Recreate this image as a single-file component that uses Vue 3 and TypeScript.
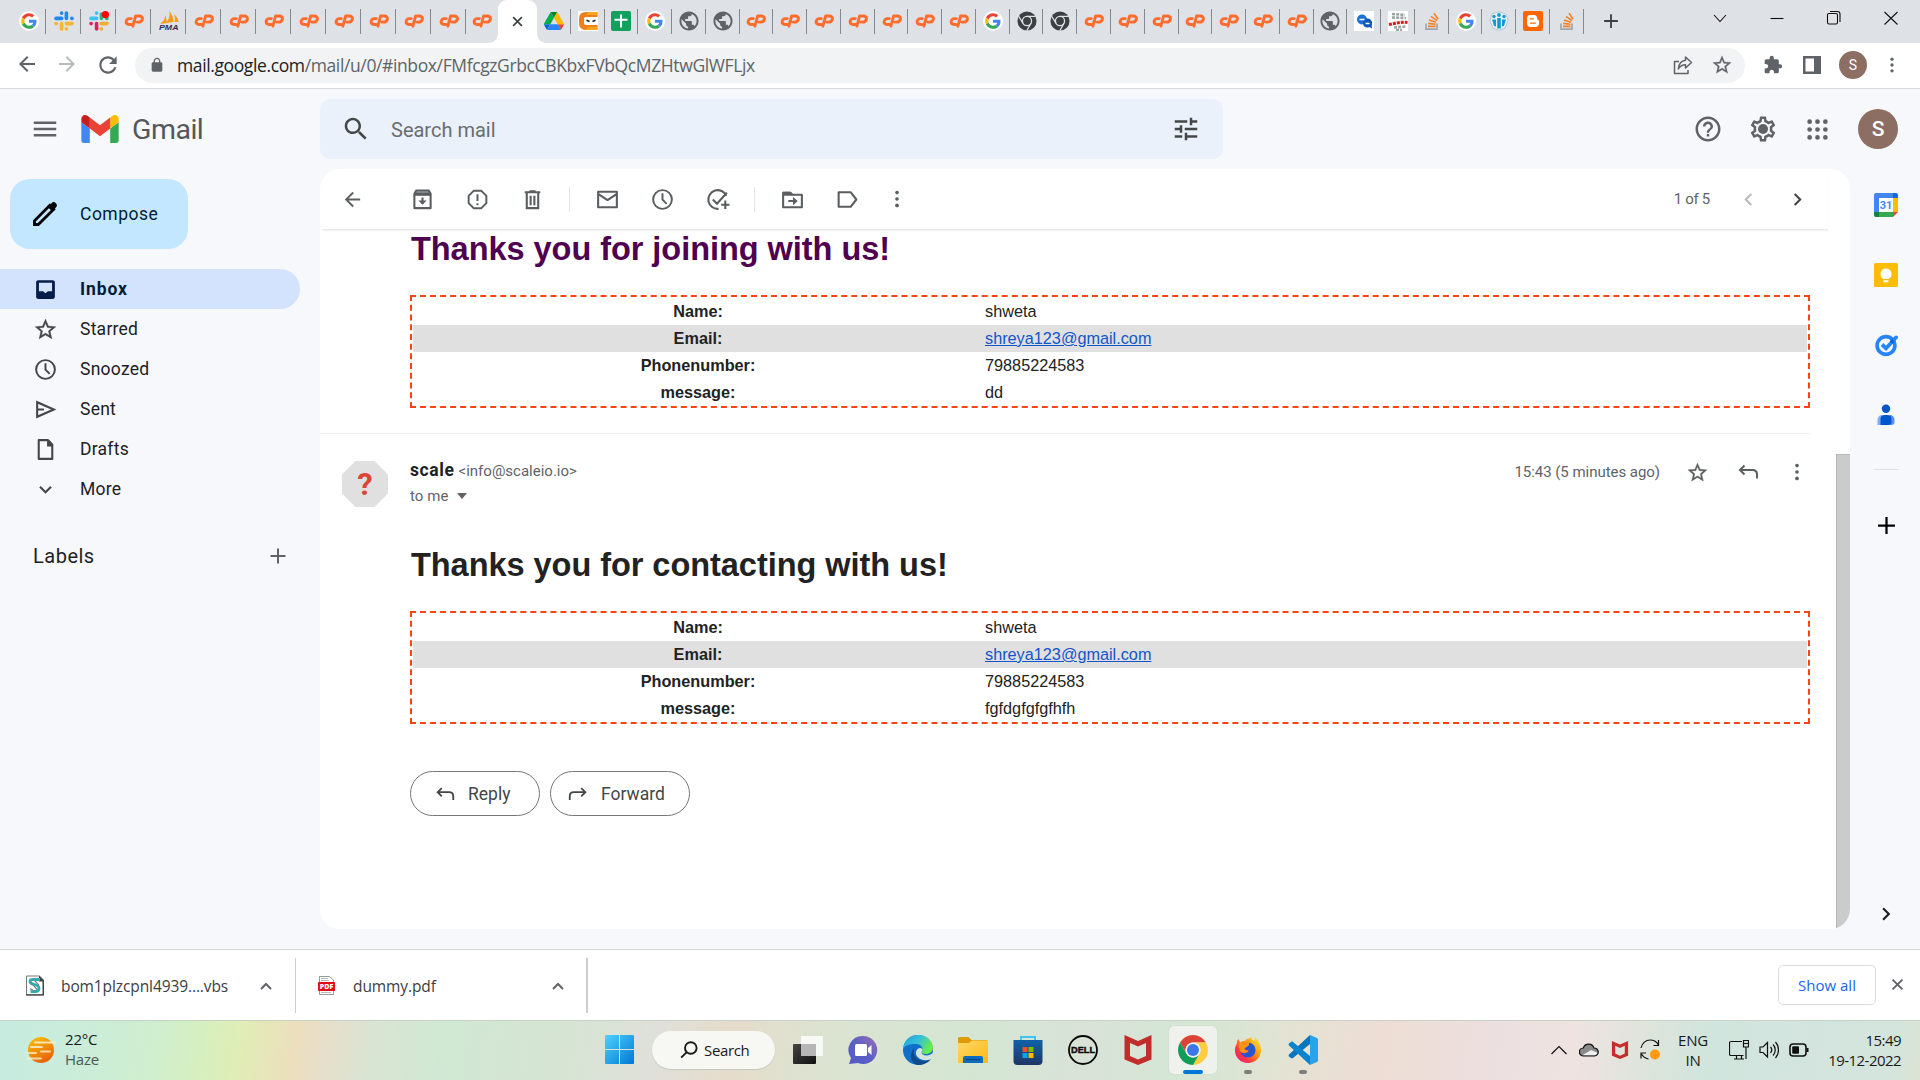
<script setup lang="ts">
interface Row {
  label: string
  value: string
  link?: boolean
}

const repeat = (name: string, count: number): string[] => Array.from({ length: count }, () => name)

const leftTabs: string[] = ['google', 'slack', 'slack-alert', 'cpanel', 'pma', ...repeat('cpanel', 9)]
const rightTabs: string[] = [
  'drive', 'ninja', 'sheets', 'google', 'globe', 'globe',
  ...repeat('cpanel', 7),
  'google', 'chrome-mono', 'chrome-mono',
  ...repeat('cpanel', 7),
  'globe', 'chat-blue', 'grid-red', 'stack', 'google', 'people', 'blogger', 'stack',
]

const folders = [
  { name: 'Inbox', icon: 'inbox' },
  { name: 'Starred', icon: 'star' },
  { name: 'Snoozed', icon: 'clock' },
  { name: 'Sent', icon: 'send' },
  { name: 'Drafts', icon: 'file' },
  { name: 'More', icon: 'expand' },
]

const toolGroups: string[][] = [
  ['archive', 'spam', 'trash'],
  ['mail', 'clock', 'task-add'],
  ['move', 'label'],
]

const rowsFor = (message: string): Row[] => [
  { label: 'Name:', value: 'shweta' },
  { label: 'Email:', value: 'shreya123@gmail.com', link: true },
  { label: 'Phonenumber:', value: '79885224583' },
  { label: 'message:', value: message },
]
const joinRows = rowsFor('dd')
const contactRows = rowsFor('fgfdgfgfgfhfh')

const pinned: { icon: string; state?: string }[] = [
  { icon: 'taskview' },
  { icon: 'teams' },
  { icon: 'edge' },
  { icon: 'explorer' },
  { icon: 'store' },
  { icon: 'dell' },
  { icon: 'mcafee' },
  { icon: 'chrome', state: 'active' },
  { icon: 'firefox', state: 'open' },
  { icon: 'vscode', state: 'open' },
]
</script>

<template>
  <div class="screen">
    <svg class="sprite" width="0" height="0" aria-hidden="true">
      <defs>
        <linearGradient id="g-win" x1="0" y1="0" x2="1" y2="1"><stop offset="0" stop-color="#50d0ff" /><stop offset="1" stop-color="#0078d4" /></linearGradient>
        <linearGradient id="g-sun" x1="0" y1="0" x2="0.5" y2="1"><stop offset="0" stop-color="#fcc400" /><stop offset="1" stop-color="#e8650c" /></linearGradient>
        <linearGradient id="g-teams" x1="0" y1="1" x2="1" y2="0"><stop offset="0" stop-color="#5558c8" /><stop offset="0.5" stop-color="#5b5fc7" /><stop offset="1" stop-color="#9a6fb0" /></linearGradient>
        <linearGradient id="g-edge" x1="0" y1="0" x2="1" y2="0.4"><stop offset="0" stop-color="#1f9fe0" /><stop offset="0.55" stop-color="#35c1d9" /><stop offset="1" stop-color="#66eb4e" /></linearGradient>
        <linearGradient id="g-folder" x1="0" y1="0" x2="1" y2="1"><stop offset="0" stop-color="#ffd96a" /><stop offset="1" stop-color="#fdb813" /></linearGradient>
        <linearGradient id="g-store" x1="0" y1="0" x2="0" y2="1"><stop offset="0" stop-color="#0f62a8" /><stop offset="1" stop-color="#1f3566" /></linearGradient>
        <linearGradient id="g-fox" x1="1" y1="0" x2="0" y2="1"><stop offset="0" stop-color="#fff44f" /><stop offset="0.4" stop-color="#ff980e" /><stop offset="0.7" stop-color="#ff3647" /><stop offset="1" stop-color="#e31587" /></linearGradient>
        <linearGradient id="g-dark" x1="0" y1="0" x2="1" y2="1"><stop offset="0" stop-color="#444" /><stop offset="1" stop-color="#111" /></linearGradient>
      </defs>

      <!-- tab favicons -->
      <symbol id="google" viewBox="0 0 60 60">
        <circle cx="30" cy="30" r="30" fill="#fff" />
        <g transform="translate(6.5 6.5) scale(.98)">
          <path fill="#EA4335" d="M24 9.5c3.54 0 6.71 1.22 9.21 3.6l6.85-6.85C35.9 2.38 30.47 0 24 0 14.62 0 6.51 5.38 2.56 13.22l7.98 6.19C12.43 13.72 17.74 9.5 24 9.5z" />
          <path fill="#4285F4" d="M46.98 24.55c0-1.57-.15-3.09-.38-4.55H24v9.02h12.94c-.58 2.96-2.26 5.48-4.78 7.18l7.73 6c4.51-4.18 7.09-10.36 7.09-17.65z" />
          <path fill="#FBBC05" d="M10.53 28.59c-.48-1.45-.76-2.99-.76-4.59s.27-3.14.76-4.59l-7.98-6.19C.92 16.46 0 20.12 0 24c0 3.88.92 7.54 2.56 10.78l7.97-6.19z" />
          <path fill="#34A853" d="M24 48c6.48 0 11.93-2.13 15.89-5.81l-7.73-6c-2.15 1.45-4.92 2.3-8.16 2.3-6.26 0-11.57-4.22-13.47-9.91l-7.98 6.19C6.51 42.62 14.62 48 24 48z" />
        </g>
      </symbol>
      <symbol id="slack" viewBox="0 0 20 20">
        <g stroke-width="3.6" stroke-linecap="round">
          <path stroke="#1e88f5" d="M7.6 2v.2M2 7.4h5.6M12.4 2v5.4M18 7.4h-.2" /><path stroke="#f4b82e" d="M2 12.6h.2M7.6 12.6V18M12.4 12.6H18M12.4 18v-.2" />
        </g>
      </symbol>
      <symbol id="slack-alert" viewBox="0 0 20 20">
        <g stroke-width="3.6" stroke-linecap="round">
          <path stroke="#36c5f0" d="M7.6 2v.2M2 7.4h5.6" /><path stroke="#2eb67d" d="M12.4 3v4.4M18 7.4h-.2" /><path stroke="#e01e5a" d="M2 12.6h.2M7.6 12.6V18" /><path stroke="#ecb22e" d="M12.4 12.6H18M12.4 18v-.2" />
        </g>
        <circle cx="16.4" cy="3.6" r="3.6" fill="#f00" />
      </symbol>
      <symbol id="cpanel" viewBox="0 0 20 20">
        <g fill="none" stroke="#ff6c2c" stroke-width="2.9" stroke-linecap="round" stroke-linejoin="round">
          <path d="M7.3 7.6H5.3a3.1 3.1 0 0 0-3.2 3c0 1.8 1.2 2.9 3 2.9h2" /><path d="M8.9 15.2 11.6 5h3.8c2.2 0 3.4 1.4 3 3.1-.4 2-1.8 3-3.8 3h-1.8" />
        </g>
      </symbol>
      <symbol id="drive" viewBox="0 0 87.3 78">
        <path d="m6.6 66.85 3.85 6.65c.8 1.4 1.95 2.5 3.3 3.3l13.75-23.8h-27.5c0 1.55.4 3.1 1.2 4.5z" fill="#0066da" /><path d="m43.65 25-13.75-23.8c-1.35.8-2.5 1.9-3.3 3.3l-25.4 44a9.06 9.06 0 0 0-1.2 4.5h27.5z" fill="#00ac47" /><path d="m73.55 76.8c1.35-.8 2.5-1.9 3.3-3.3l1.6-2.75 7.65-13.25c.8-1.4 1.2-2.95 1.2-4.5h-27.5l5.85 11.5z" fill="#ea4335" /><path d="m43.65 25 13.75-23.8c-1.35-.8-2.9-1.2-4.5-1.2h-18.5c-1.6 0-3.15.45-4.5 1.2z" fill="#00832d" /><path d="m59.8 53h-32.3l-13.75 23.8c1.35.8 2.9 1.2 4.5 1.2h50.8c1.6 0 3.15-.45 4.5-1.2z" fill="#2684fc" /><path d="m73.4 26.5-12.7-22c-.8-1.4-1.95-2.5-3.3-3.3l-13.75 23.8 16.15 28h27.45c0-1.55-.4-3.1-1.2-4.5z" fill="#ffba00" />
      </symbol>
      <symbol id="ninja" viewBox="0 0 20 20">
        <rect width="20" height="20" fill="#fff" /><path fill="none" stroke="#ef7f1a" stroke-width="5" d="M19.5 3.5H8Q3.500 3.500 3.500 8v4Q3.500 16.500 8 16.500h11.500" /><path fill="#f7a81a" d="M10 1h9.500v3H8zM10 16h9.500v3H8z" /><path fill="#fff" d="M9 7h10.500v6H9a3 3 0 0 1 0-6z" /><path stroke="#222" stroke-width="1.700" d="M8.500 9.300l3 1.200M17.500 9.300l-3 1.200" />
      </symbol>
      <symbol id="sheets" viewBox="0 0 20 20"><rect width="20" height="20" rx="2" fill="#12a15c" /><path stroke="#fff" stroke-width="2" d="M10 3.500v13M3.500 8.800h13" /></symbol>
      <symbol id="globe" viewBox="1.5 1.5 21 21"><path fill="#5f6368" d="M12 2C6.48 2 2 6.48 2 12s4.48 10 10 10 10-4.48 10-10S17.52 2 12 2zm-1 17.93c-3.95-.49-7-3.85-7-7.93 0-.62.08-1.21.21-1.79L9 15v1c0 1.1.9 2 2 2v1.93zm6.9-2.54c-.26-.81-1-1.39-1.9-1.39h-1v-3c0-.55-.45-1-1-1H8v-2h2c.55 0 1-.45 1-1V7h2c1.1 0 2-.9 2-2v-.41c2.93 1.19 5 4.06 5 7.41 0 2.08-.8 3.97-2.1 5.39z" /></symbol>
      <symbol id="chrome-mono" viewBox="1 1 46 46">
        <circle cx="24" cy="24" r="22" fill="#3c4043" /><g fill="none" stroke="#dee1e6" stroke-width="3"><path d="M44 13.500H24M14.900 29.250 4.500 12.500M33.100 29.250 23.500 46.500" /><circle cx="24" cy="24" r="10.500" /></g>
      </symbol>
      <symbol id="chat-blue" viewBox="0 0 20 20"><rect width="20" height="20" fill="#fff" /><circle cx="8" cy="8.5" r="5" fill="#1d6fd8" /><circle cx="13.5" cy="12" r="4.6" fill="#0d57b8" /><path fill="#0d57b8" d="M14 15l4 2.5-.5-5z" /><path stroke="#fff" stroke-width="1.3" d="M5.5 8.5h5M11.5 12.5h4" /></symbol>
      <symbol id="grid-red" viewBox="0 0 20 20"><rect width="20" height="20" fill="#fff" /><path fill="none" stroke="#9aa5a0" stroke-width="2.6" stroke-dasharray="3 1.2" d="M4 3l13 1M4 6.5l14 .5M6 16.5l12-1M8 19h6" /><path fill="none" stroke="#e01b22" stroke-width="3.2" stroke-dasharray="3 1" d="M1 13.5c6-1 12-3 18.500-2" /></symbol>
      <symbol id="stack" viewBox="0 0 20 20"><path fill="none" stroke="#9fa6ad" stroke-width="1.7" d="M4 12.5v5.700h11v-5.700" /><path fill="none" stroke="#f48024" stroke-width="1.6" d="M6 15.4h7.5M6.2 12.4l7.3.8M7 9l7 2.2M9 5.4l6 4.3M12 2.2l4.2 6" /></symbol>
      <symbol id="people" viewBox="0 0 20 20"><path fill="#e9f5fb" stroke="#a9bcc6" stroke-width=".8" d="M10 .8 17 3l2 7-3 7-6 2.4L4 17l-3-7 2-7z" /><g fill="#1597d3"><circle cx="10" cy="4" r="1.9" /><circle cx="5" cy="5.5" r="1.7" /><circle cx="15" cy="5.5" r="1.7" /><path d="M8.2 7h3.6v10.5H8.2zM3 8.5h4v7l-2-.5zM13 8.5h4l-2 6.5-2 .5z" /></g></symbol>
      <symbol id="blogger" viewBox="0 0 20 20"><rect width="20" height="20" rx="2" fill="#ff6600" /><path fill="#fff" fill-rule="evenodd" d="M7.5 4h3.3c2 0 3.4 1.4 3.4 3.2 0 1.5.3 1.8 1.3 2 .5.1.6.5.6 1v2c0 2.3-1.6 3.8-3.8 3.8H7.500C5.3 16 4 14.5 4 12.4V7.6C4 5.4 5.3 4 7.5 4zm.1 3.2c-1 0-1 1.4 0 1.400h2.7c1 0 1-1.4 0-1.4zm0 4.2c-1 0-1 1.4 0 1.4h4.6c1 0 1-1.4 0-1.4z" /></symbol>

      <!-- line icons -->
      <symbol id="back" viewBox="0 0 24 24"><path fill="currentColor" d="M20 11H7.83l5.59-5.59L12 4l-8 8 8 8 1.41-1.41L7.83 13H20v-2z" /></symbol>
      <symbol id="refresh" viewBox="0 0 24 24"><path fill="currentColor" d="M17.65 6.35C16.2 4.9 14.21 4 12 4c-4.42 0-7.99 3.58-7.99 8s3.57 8 7.99 8c3.73 0 6.84-2.55 7.73-6h-2.08c-.82 2.33-3.04 4-5.65 4-3.31 0-6-2.69-6-6s2.69-6 6-6c1.66 0 3.14.69 4.22 1.78L13 11h7V4l-2.35 2.35z" /></symbol>
      <symbol id="lock" viewBox="0 0 24 24"><path fill="currentColor" d="M18 8h-1V6c0-2.76-2.24-5-5-5S7 3.24 7 6v2H6c-1.1 0-2 .9-2 2v10c0 1.1.9 2 2 2h12c1.1 0 2-.9 2-2V10c0-1.1-.9-2-2-2zM8.9 6a3.1 3.1 0 0 1 6.2 0v2H8.9V6z" /></symbol>
      <symbol id="share" viewBox="0 0 20 20"><path fill="none" stroke="currentColor" stroke-width="1.5" stroke-linejoin="round" d="M6 6.5H1.5v12H15V15M12.5 2l6 5.5-6 5.5V9.8C9 9.8 7 11 5.3 14 5.8 8.8 8.8 5.6 12.5 5.2z" /></symbol>
      <symbol id="puzzle" viewBox="0 0 24 24"><path fill="currentColor" d="M20.5 11H19V7c0-1.1-.9-2-2-2h-4V3.5C13 2.12 11.88 1 10.5 1S8 2.12 8 3.5V5H4c-1.1 0-1.99.9-1.99 2v3.8H3.5c1.49 0 2.7 1.21 2.7 2.7s-1.21 2.7-2.7 2.7H2V20c0 1.1.9 2 2 2h3.8v-1.5c0-1.49 1.21-2.7 2.7-2.7 1.49 0 2.7 1.21 2.7 2.7V22H17c1.1 0 2-.9 2-2v-4h1.5c1.38 0 2.5-1.12 2.5-2.5S21.88 11 20.5 11z" /></symbol>
      <symbol id="panel" viewBox="0 0 18 18"><path fill="currentColor" fill-rule="evenodd" d="M0 0h18v18H0zM2.5 2.500v13h8.500v-13z" /></symbol>
      <symbol id="dots" viewBox="0 0 24 24"><g fill="currentColor"><circle cx="12" cy="5" r="2" /><circle cx="12" cy="12" r="2" /><circle cx="12" cy="19" r="2" /></g></symbol>
      <symbol id="menu" viewBox="0 0 24 24"><path fill="currentColor" d="M3 18h18v-2H3v2zm0-5h18v-2H3v2zm0-7v2h18V6H3z" /></symbol>
      <symbol id="search" viewBox="0 0 24 24"><path fill="currentColor" d="M15.5 14h-.79l-.28-.27C15.41 12.59 16 11.11 16 9.5 16 5.91 13.09 3 9.5 3S3 5.91 3 9.5 5.91 16 9.5 16c1.61 0 3.09-.59 4.23-1.57l.27.28v.79l5 4.99L20.49 19l-4.99-5zm-6 0C7.01 14 5 11.99 5 9.5S7.01 5 9.5 5 14 7.01 14 9.5 11.99 14 9.5 14z" /></symbol>
      <symbol id="tune" viewBox="0 0 24 24"><path fill="currentColor" d="M3 17v2h6v-2H3zM3 5v2h10V5H3zm10 16v-2h8v-2h-8v-2h-2v6h2zM7 9v2H3v2h4v2h2V9H7zm14 4v-2H11v2h10zm-6-4h2V7h4V5h-4V3h-2v6z" /></symbol>
      <symbol id="help" viewBox="0 0 24 24"><path fill="currentColor" d="M11 18h2v-2h-2v2zm1-16C6.48 2 2 6.48 2 12s4.48 10 10 10 10-4.48 10-10S17.52 2 12 2zm0 18c-4.41 0-8-3.59-8-8s3.59-8 8-8 8 3.59 8 8-3.59 8-8 8zm0-14c-2.21 0-4 1.79-4 4h2c0-1.1.9-2 2-2s2 .9 2 2c0 2-3 1.75-3 5h2c0-2.25 3-2.5 3-5 0-2.21-1.79-4-4-4z" /></symbol>
      <symbol id="gear" viewBox="0 0 24 24"><path fill="currentColor" d="M19.43 12.98c.04-.32.07-.64.07-.98 0-.34-.03-.66-.07-.98l2.11-1.65c.19-.15.24-.42.12-.64l-2-3.46c-.09-.16-.26-.25-.44-.25-.06 0-.12.01-.17.03l-2.49 1c-.52-.4-1.08-.73-1.69-.98l-.38-2.65C14.46 2.18 14.25 2 14 2h-4c-.25 0-.46.18-.49.42l-.38 2.65c-.61.25-1.17.59-1.69.98l-2.49-1c-.06-.02-.12-.03-.18-.03-.17 0-.34.09-.43.25l-2 3.46c-.13.22-.07.49.12.64l2.11 1.65c-.04.32-.07.65-.07.98 0 .33.03.66.07.98l-2.11 1.65c-.19.15-.24.42-.12.64l2 3.46c.09.16.26.25.44.25.06 0 .12-.01.17-.03l2.49-1c.52.4 1.08.73 1.69.98l.38 2.65c.03.24.24.42.49.42h4c.25 0 .46-.18.49-.42l.38-2.65c.61-.25 1.17-.59 1.69-.98l2.49 1c.06.02.12.03.18.03.17 0 .34-.09.43-.25l2-3.46c.12-.22.07-.49-.12-.64l-2.11-1.65zm-1.98-1.71c.04.31.05.52.05.73 0 .21-.02.43-.05.73l-.14 1.13.89.7 1.08.84-.7 1.21-1.27-.51-1.04-.42-.9.68c-.43.32-.84.56-1.25.73l-1.06.43-.16 1.13-.2 1.35h-1.4l-.19-1.35-.16-1.13-1.06-.43c-.43-.18-.83-.41-1.23-.71l-.91-.7-1.06.43-1.27.51-.7-1.21 1.08-.84.89-.7-.14-1.13c-.03-.31-.05-.54-.05-.74s.02-.43.05-.73l.14-1.13-.89-.7-1.08-.84.7-1.21 1.27.51 1.04.42.9-.68c.43-.32.84-.56 1.25-.73l1.06-.43.16-1.13.2-1.35h1.39l.19 1.35.16 1.13 1.06.43c.43.18.83.41 1.23.71l.91.7 1.06-.43 1.27-.51.7 1.21-1.07.85-.89.7.14 1.13z" /><circle cx="12" cy="12" r="4" fill="currentColor" /></symbol>
      <symbol id="apps" viewBox="0 0 24 24"><path stroke="currentColor" stroke-width="4.2" stroke-linecap="round" d="M5 5h0M12 5h0M19 5h0M5 12h0M12 12h0M19 12h0M5 19h0M12 19h0M19 19h0" /></symbol>
      <symbol id="pencil" viewBox="0 0 24 24"><path fill="none" stroke="currentColor" stroke-width="2.6" d="M2.3 21.700v-3.500L16.5 3.9l3.600 3.600L5.800 21.700z" /><path fill="currentColor" d="M14.500 5.500 18 2a2.800 2.800 0 0 1 4 4L18.500 9.500z" /></symbol>
      <symbol id="inbox" viewBox="0 0 24 24"><path fill="currentColor" d="M19 3H5c-1.1 0-2 .9-2 2v14c0 1.1.9 2 2 2h14c1.1 0 2-.9 2-2V5c0-1.1-.9-2-2-2zm-.7 10.600h-4L12 15.600l-2.300-2h-4V5.600h12.600z" /></symbol>
      <symbol id="star" viewBox="0 0 24 24"><path fill="currentColor" stroke="currentColor" stroke-width=".3" d="M22 9.24l-7.19-.62L12 2 9.19 8.63 2 9.24l5.46 4.73L5.82 21 12 17.27 18.18 21l-1.63-7.03L22 9.24zM12 15.4l-3.76 2.27 1-4.28-3.32-2.88 4.38-.38L12 6.1l1.71 4.04 4.38.38-3.32 2.88 1 4.28L12 15.4z" /></symbol>
      <symbol id="clock" viewBox="0 0 24 24"><circle cx="12" cy="12" r="9" fill="none" stroke="currentColor" stroke-width="1.9" /><path fill="none" stroke="currentColor" stroke-width="1.9" d="M12 6v6.200l4 4" /></symbol>
      <symbol id="send" viewBox="0 0 24 24"><path fill="none" stroke="currentColor" stroke-width="2" d="M4 5v14L20 12zM4 12h6.5" /></symbol>
      <symbol id="file" viewBox="0 0 24 24"><path fill="none" stroke="currentColor" stroke-width="2" stroke-linejoin="round" d="M5.500 3h9l4 4.500V21h-13z" /><path fill="currentColor" d="M13.500 3h2l3.500 4v2h-5.500z" /></symbol>
      <symbol id="expand" viewBox="0 0 24 24"><path fill="currentColor" d="M16.59 8.59 12 13.17 7.41 8.59 6 10l6 6 6-6z" /></symbol>
      <symbol id="chevron" viewBox="0 0 24 24"><path fill="currentColor" d="M10 6 8.59 7.41 13.17 12l-4.58 4.59L10 18l6-6z" /></symbol>
      <symbol id="plus" viewBox="0 0 24 24"><path stroke="currentColor" stroke-width="2" d="M12 4.500v15M4.500 12h15" /></symbol>
      <symbol id="archive" viewBox="0 0 24 24"><path fill="none" stroke="currentColor" stroke-width="2" stroke-linejoin="round" d="M4.200 6.500 6 3.500h12l1.800 3V20.300H4.200zM4.200 7.500h15.600M12 10v6" /><path fill="currentColor" d="M4.500 5h15v3h-15zM8 13h8l-4 4z" /></symbol>
      <symbol id="spam" viewBox="0 0 24 24"><path fill="none" stroke="currentColor" stroke-width="1.9" stroke-linejoin="round" d="M8.500 3.500h7l5 5v7l-5 5h-7l-5-5v-7zM12 7v6.500M12 15.500v2" /></symbol>
      <symbol id="trash" viewBox="0 0 24 24"><path fill="none" stroke="currentColor" stroke-width="2" d="M4.500 5h15M9 4h6M6.500 6v14.300h11V6M10.200 8.500v9M13.800 8.500v9" /></symbol>
      <symbol id="mail" viewBox="0 0 24 24"><path fill="none" stroke="currentColor" stroke-width="2" stroke-linejoin="round" d="M3 4.500h18v15H3zM3 6.500l9 6 9-6" /></symbol>
      <symbol id="task-add" viewBox="0 0 24 24"><path fill="none" stroke="currentColor" stroke-width="2" d="M20.500 8.500A9 9 0 1 0 13 21M7.500 12l4 4L21 5.500M19.500 13v8M15.500 17h8" /></symbol>
      <symbol id="move" viewBox="0 0 24 24"><path fill="none" stroke="currentColor" stroke-width="2" stroke-linejoin="round" d="M3 5.500h7l2 2h9v12H3zM8 13.500h6" /><path fill="currentColor" d="M3 4.500h7l2 3v1H3zM12.500 9.500l4.500 4-4.500 4z" /></symbol>
      <symbol id="label" viewBox="0 0 24 24"><path fill="none" stroke="currentColor" stroke-width="2" stroke-linejoin="round" d="M3.500 5H15l5.500 7-5.500 7H3.500z" /></symbol>
      <symbol id="reply" viewBox="0 0 24 24"><path fill="none" stroke="currentColor" stroke-width="2" d="M8.500 5.500 4 10l4.500 4.500M4 10H16.500c3 0 4.500 1.800 4.500 4.500V18.500" /></symbol>
      <symbol id="close" viewBox="0 0 24 24"><path stroke="currentColor" stroke-width="2.6" d="M5 5l14 14M19 5 5 19" /></symbol>

      <!-- product icons -->
      <symbol id="gmail" viewBox="52 42 88 66"><path fill="#4285f4" d="M58 108h14V74L52 59v43c0 3.32 2.69 6 6 6" /><path fill="#34a853" d="M120 108h14c3.32 0 6-2.69 6-6V59l-20 15" /><path fill="#fbbc04" d="M120 48v26l20-15v-8c0-7.42-8.47-11.65-14.4-7.2" /><path fill="#ea4335" d="M72 74V48l24 18 24-18v26L96 92" /><path fill="#c5221f" d="M52 51v8l20 15V48l-5.6-4.2c-5.94-4.45-14.4-.22-14.4 7.2" /></symbol>
      <symbol id="keep" viewBox="0 0 24 24"><rect width="24" height="24" rx="1.5" fill="#fbbc04" /><path fill="#fff" d="M12 5.500a5.500 5.500 0 0 0-3 10.100V16h6v-.4a5.500 5.500 0 0 0-3-10.100zM9.500 17.200h5v2h-5z" /></symbol>
      <symbol id="tasks" viewBox="0 0 24 24"><circle cx="12" cy="12.500" r="8.900" fill="none" stroke="#2684fc" stroke-width="3.600" /><path fill="none" stroke="#2684fc" stroke-width="3.800" d="M8 11.500l4 3.800 6-6.300" /><path stroke="#0066da" stroke-width="3.800" d="M17 9.500 20.500 6" /><path stroke="#2684fc" stroke-width="3.800" stroke-linecap="round" d="M20.500 6l1.600-1.600" /></symbol>
      <symbol id="contacts" viewBox="0 0 24 24"><circle cx="12" cy="5.800" r="4.200" fill="#0057cc" /><path fill="#83aefb" d="M3.500 22v-5c0-3 2-5 5-5v10z" /><path fill="#5c8ef5" d="M15.500 22h2c2 0 3-1 3-3v-2c0-3-2-5-5-5z" /><path fill="#0057cc" d="M6.500 22v-6c0-2.500 1.500-4 4-4h3c2.500 0 4 1.500 4 4v3c0 2-1 3-3 3z" /></symbol>

      <!-- taskbar icons -->
      <symbol id="windows" viewBox="0 0 29 29"><path fill="url(#g-win)" d="M1 0h13v14H0V1a1 1 0 0 1 1-1zM15 0h13a1 1 0 0 1 1 1v13H15zM0 15h14v14H1a1 1 0 0 1-1-1zM15 15h14v13a1 1 0 0 1-1 1H15z" /></symbol>
      <symbol id="taskview" viewBox="0 0 30 30"><rect x="0" y="9" width="23" height="20" rx="1" fill="url(#g-dark)" /><rect x="8" y="1" width="22" height="20" rx="1" fill="#fff" fill-opacity=".8" /><path fill="#b6b6b6" d="M8 9h15v12H8z" /></symbol>
      <symbol id="teams" viewBox="0 0 30 30"><path fill="url(#g-teams)" d="M15 1a14 14 0 1 1-5 27L1 29l2-6A14 14 0 0 1 15 1z" /><rect x="7" y="9" width="12" height="12" rx="1.5" fill="#fff" /><path fill="#fff" d="m20 13 3.500-3v10L20 17z" /></symbol>
      <symbol id="edge" viewBox="0 0 30 30"><circle cx="15" cy="15" r="15" fill="#0f6fc9" /><path fill="url(#g-edge)" d="M0 14C1 5 7 0 15 0c9 0 15 6 15 12.500 0 4-3 6.500-7 6.500-3 0-4.500-1-4.500-2 0-1 1-1.500 1-3 0-3-3-5-7-5C6 9 1 11 0 14z" /><path fill="#114a8b" d="M11 13c-2 8 4 13 11 13 2 0 4-1 6-2-3 4-8 6-13 6C9 29 5 21 11 13z" /><path fill="#d6e5dc" d="M18.500 17c0 2 2 3.500 5 3.500 2.500 0 5-1 6.300-3l.2 5-3 2C19 27 12 22 13 17c.5-2.500 2.500-4 4-4 1.500 0 2.500 1.500 2.500 2 0 1-1 1-1 2z" /></symbol>
      <symbol id="explorer" viewBox="0 0 30 30"><path fill="#dd9a0a" d="M0 3.500A1.500 1.500 0 0 1 1.500 2h9l3 3H29v6H0z" /><path fill="url(#g-folder)" d="M0 8h11l3-2.500h16V28H0z" /><path fill="#0f6cbd" d="M5 28v-5a2 2 0 0 1 2-2h16a2 2 0 0 1 2 2v5z" /><path stroke="#0a4884" stroke-width="1.200" d="M8 24.500h14" /></symbol>
      <symbol id="store" viewBox="0 0 30 30"><path fill="none" stroke="#3cc5f5" stroke-width="2" d="M8 7V2h14v5" /><path fill="url(#g-store)" d="M.500 5h29v21a4 4 0 0 1-4 4h-21a4 4 0 0 1-4-4z" /><path fill="#f25022" d="M9.500 12h5v5h-5z" /><path fill="#7fba00" d="M15.500 12h5v5h-5z" /><path fill="#00a4ef" d="M9.500 18h5v5h-5z" /><path fill="#ffb900" d="M15.500 18h5v5h-5z" /></symbol>
      <symbol id="mcafee" viewBox="0 0 30 30"><path fill="#c01818" fill-opacity=".9" d="M1.500 0 15 6 28.500 0v24.500L15 30 1.500 24.500zM7 8v13l8 3.500 8-3.500V8l-8 3.500z" fill-rule="evenodd" /></symbol>
      <symbol id="chrome" viewBox="2 2 44 44"><path fill="#db4437" d="M4.950 13A22 22 0 0 1 43.050 13H24A11 11 0 0 0 14.470 29.500Z" /><path fill="#ffcd40" d="M43.050 13A22 22 0 0 1 24 46L33.530 29.500A11 11 0 0 0 24 13Z" /><path fill="#0f9d58" d="M24 46A22 22 0 0 1 4.950 13L14.470 29.500A11 11 0 0 0 33.530 29.500Z" /><circle cx="24" cy="24" r="11" fill="#f1f1f1" /><circle cx="24" cy="24" r="8.800" fill="#3b78e7" /></symbol>
      <symbol id="firefox" viewBox="0 0 30 30"><path fill="url(#g-fox)" d="M3 8c0-2 1-4 2-5 0 2 1 3 2 4 1-1 3-2 5-2 2-3 4-2 7-4 0 2 0 3 2 4 2-1 1-3 1-4 5 4 7 9 7 14 0 8-6 14-14 14S1 23 1 15c0-3 1-5 2-7z" /><path fill="#2456d6" d="M15 7c5 0 8 4 8 8 0 5-4 8-8 8-5 0-8-4-8-7 2 2 4 3 6 2 3-1 3-2 2-3-3 0-4-1-4-3 1-1 3-1 4-1z" /><path fill="#ff9417" d="M5 8c3-1 5 0 6 1 2-2 3-4 6-4-1 2-1 3-1 5l-3 2c-3 1-2 4 2 4-3 4-8 2-9-1z" /></symbol>
      <symbol id="vscode" viewBox="0 0 30 30"><path fill="#0a74bd" d="M22 0 1 19.500c-1 1 0 2 .5 2.500l1.500 1c1 .6 1.600.4 2 0L22 9z" /><path fill="#0a84ce" d="M22 30 1 10.500c-1-1 0-2 .5-2.500L3 7c1-.6 1.600-.4 2 0l17 14z" /><path fill="#29a3ee" d="M22 0l7 3c.6.300 1 1 1 1.500v21c0 .6-.4 1.200-1 1.500l-7 3z" /></symbol>
      <symbol id="sun" viewBox="0 0 30 26"><circle cx="15" cy="13" r="13" fill="url(#g-sun)" /><g stroke="#fbeecb" stroke-width="2" stroke-linecap="round"><path d="M9 5.500h20" opacity=".9" /><path d="M5 10h11" opacity=".85" /><path d="M15 14.500h9" opacity=".8" /><path d="M1 16h9" opacity=".8" /><path d="M1 21.500h14" opacity=".8" /></g></symbol>
    </svg>

    <!-- tab strip -->
    <header class="tabstrip">
      <div class="tabs tabs-left">
        <div v-for="(t, i) in leftTabs" :key="i" class="tab">
          <svg v-if="t === 'pma'" width="20" height="20" viewBox="0 0 20 20"><path fill="#f89c0e" d="M1 13C4 11 6 8 6.500 4l1.500 8zM7 12C10 9 11 5 10.500 0c3 4 4 8 4 11zM15.500 11c1-3 .5-6-1-8 3 2 5 5 5 8z" /><text x="0" y="19.400" font-family="Liberation Sans" font-weight="700" font-style="italic" font-size="7.400" textLength="19.500" lengthAdjust="spacingAndGlyphs" fill="#2f2f5c">PMA</text></svg>
          <svg v-else width="20" height="20"><use :href="'#' + t" /></svg>
        </div>
      </div>
      <div class="tab-active"><svg width="15" height="15"><use href="#close" /></svg></div>
      <div class="tabs tabs-right">
        <div v-for="(t, i) in rightTabs" :key="i" class="tab"><svg width="20" height="20"><use :href="'#' + t" /></svg></div>
      </div>
      <svg class="newtab" width="22" height="22"><use href="#plus" /></svg>
      <div class="winctl">
        <svg width="16" height="16" viewBox="0 0 16 16"><path d="M2 5l6 6.500L14 5" /></svg>
        <svg width="16" height="16" viewBox="0 0 16 16"><path d="M1.500 8.500h13" /></svg>
        <svg width="16" height="16" viewBox="0 0 16 16"><rect x="1.500" y="3.500" width="10" height="10.500" rx="1.500" /><path d="M4 1.500h7.500a2.500 2.500 0 0 1 2.500 2.500v8" /></svg>
        <svg width="16" height="16" viewBox="0 0 16 16"><path d="M1.500 2l13 12.500M14.500 2l-13 12.500" /></svg>
      </div>
    </header>

    <!-- address bar -->
    <div class="toolbar">
      <div class="nav">
        <svg width="24" height="24"><use href="#back" /></svg>
        <svg class="forward" width="24" height="24"><use href="#back" /></svg>
        <svg width="26" height="26"><use href="#refresh" /></svg>
      </div>
      <div class="omnibox">
        <svg class="lock" width="16" height="16"><use href="#lock" /></svg>
        <span class="url"><b>mail.google.com</b>/mail/u/0/#inbox/FMfcgzGrbcCBKbxFVbQcMZHtwGlWFLjx</span>
        <svg class="share" width="20" height="20"><use href="#share" /></svg>
        <svg width="22" height="22"><use href="#star" /></svg>
      </div>
      <div class="ext">
        <svg width="20" height="20"><use href="#puzzle" /></svg>
        <svg width="18" height="18"><use href="#panel" /></svg>
        <span class="avatar small">S</span>
        <svg width="20" height="20"><use href="#dots" /></svg>
      </div>
    </div>

    <!-- mail client -->
    <div class="gmail">
      <div class="topbar">
        <div class="brand">
          <svg class="burger" width="30" height="30"><use href="#menu" /></svg>
          <svg width="38" height="28"><use href="#gmail" /></svg>
          <span class="wordmark">Gmail</span>
        </div>
        <div class="searchbox">
          <svg width="30" height="30"><use href="#search" /></svg>
          <span class="placeholder">Search mail</span>
          <svg width="30" height="30"><use href="#tune" /></svg>
        </div>
        <div class="account">
          <svg width="30" height="30"><use href="#help" /></svg>
          <svg width="30" height="30"><use href="#gear" /></svg>
          <svg width="27" height="27"><use href="#apps" /></svg>
          <span class="avatar">S</span>
        </div>
      </div>

      <div class="body">
        <aside class="sidebar">
          <button class="compose"><svg width="26" height="26"><use href="#pencil" /></svg><span>Compose</span></button>
          <nav>
            <a v-for="f in folders" :key="f.name" class="folder" :class="{ current: f.name === 'Inbox' }">
              <svg width="25" height="25"><use :href="'#' + f.icon" /></svg><span>{{ f.name }}</span>
            </a>
          </nav>
          <div class="labels"><span>Labels</span><svg width="24" height="24"><use href="#plus" /></svg></div>
        </aside>

        <main class="card">
          <div class="actions">
            <svg class="goback" width="23" height="23"><use href="#back" /></svg>
            <div v-for="(group, gi) in toolGroups" :key="gi" class="group">
              <span v-for="icon in group" :key="icon" class="tool"><svg width="25" height="25"><use :href="'#' + icon" /></svg></span>
            </div>
            <svg class="more" width="22" height="22"><use href="#dots" /></svg>
            <div class="pager">
              <span>1 of 5</span>
              <svg class="prev" width="25" height="25"><use href="#chevron" /></svg>
              <svg width="25" height="25"><use href="#chevron" /></svg>
            </div>
          </div>

          <div class="thread">
            <div class="messages">
              <section class="message first">
                <h1 class="quoted">Thanks you for joining with us!</h1>
                <div class="details">
                  <div v-for="r in joinRows" :key="r.label" class="row">
                    <b>{{ r.label }}</b><a v-if="r.link">{{ r.value }}</a><span v-else>{{ r.value }}</span>
                  </div>
                </div>
              </section>
              <section class="message">
                <div class="sender">
                  <svg class="unknown" width="46" height="46" viewBox="0 0 46 46"><path fill="#e0e0e0" d="M13.500 0h19L46 13.500v19L32.500 46h-19L0 32.500v-19z" /><text x="23" y="33.500" text-anchor="middle">?</text></svg>
                  <div class="who">
                    <div class="from"><b>scale</b><span>&lt;info@scaleio.io&gt;</span></div>
                    <div class="to"><span>to me</span><i class="caret"></i></div>
                  </div>
                  <div class="meta">
                    <span>15:43 (5 minutes ago)</span>
                    <svg width="23" height="23"><use href="#star" /></svg>
                    <svg width="24" height="24"><use href="#reply" /></svg>
                    <svg width="22" height="22"><use href="#dots" /></svg>
                  </div>
                </div>
                <h1>Thanks you for contacting with us!</h1>
                <div class="details">
                  <div v-for="r in contactRows" :key="r.label" class="row">
                    <b>{{ r.label }}</b><a v-if="r.link">{{ r.value }}</a><span v-else>{{ r.value }}</span>
                  </div>
                </div>
                <div class="respond">
                  <button class="reply"><svg width="25" height="25"><use href="#reply" /></svg><span>Reply</span></button>
                  <button class="fwd"><svg class="flip" width="25" height="25"><use href="#reply" /></svg><span>Forward</span></button>
                </div>
              </section>
            </div>
            <div class="scroll"><div class="thumb"></div></div>
          </div>
        </main>

        <aside class="rail">
          <svg width="24" height="24" viewBox="0 0 24 24"><path fill="#4285f4" d="M2 0h17v5H5v14H0V2a2 2 0 0 1 2-2z" /><path fill="#1967d2" d="M19 0h3a2 2 0 0 1 2 2v3h-5z" /><path fill="#fbbc04" d="M19 5h5v14h-5z" /><path fill="#34a853" d="M5 19h14v5H5z" /><path fill="#188038" d="M0 19h5v5H2a2 2 0 0 1-2-2z" /><path fill="#ea4335" d="M19 19h5l-5 5z" /><path fill="#fff" d="M5 5h14v14H5z" /><text x="12" y="16.100" text-anchor="middle" font-family="Roboto" font-weight="700" font-size="11" fill="#4285f4">31</text></svg>
          <svg width="24" height="24"><use href="#keep" /></svg>
          <svg width="24" height="24"><use href="#tasks" /></svg>
          <svg width="24" height="24"><use href="#contacts" /></svg>
          <hr />
          <svg class="add" width="27" height="27"><use href="#plus" /></svg>
          <svg class="hide" width="26" height="26"><use href="#chevron" /></svg>
        </aside>
      </div>
    </div>

    <!-- downloads -->
    <div class="shelf">
      <div class="dl dl-vbs">
        <svg width="18" height="21" viewBox="0 0 18 20"><path fill="#fff" stroke="#777" d="M.500.500h13l4 4v15H.500z" /><path fill="#444" d="M13 0l5 5v15h-1.500V6H13zM0 18.800h18V20H0z" /><path fill="none" stroke="#2ab0b4" stroke-width="2.800" d="M14 4H7C3 4 3 8 7 8.500l3 1c4 1 4 6 0 6.500H4.500" /><path stroke="#6d8a90" stroke-width="1.200" d="M4 6l8 9M7 3l6 7M4 13l5 3" /></svg>
        <span>bom1plzcpnl4939....vbs</span>
        <svg class="up" width="12" height="8" viewBox="0 0 12 8"><path d="M1 7l5-5 5 5" /></svg>
      </div>
      <div class="dl dl-pdf">
        <svg width="17" height="19" viewBox="0 0 17 19"><path fill="#fff" stroke="#999" d="M1.500.500h10l4 3.500v14.500h-14z" /><path stroke="#bbb" d="M3 2.500h7M3 4.500h8M3 16.500h10" /><rect y="6" width="17" height="9" rx=".8" fill="#e30b17" /><text x="8.500" y="13.200" text-anchor="middle" fill="#fff" font-family="Open Sans" font-size="7.200" font-weight="800" textLength="13.500" lengthAdjust="spacingAndGlyphs">PDF</text></svg>
        <span>dummy.pdf</span>
        <svg class="up" width="12" height="8" viewBox="0 0 12 8"><path d="M1 7l5-5 5 5" /></svg>
      </div>
      <div class="shelf-end">
        <button>Show all</button>
        <svg width="17" height="17"><use href="#close" /></svg>
      </div>
    </div>

    <!-- taskbar -->
    <footer class="taskbar">
      <div class="weather">
        <svg width="30" height="26"><use href="#sun" /></svg>
        <div><p>22°C</p><p class="dim">Haze</p></div>
      </div>
      <div class="dock">
        <svg class="start" width="29" height="29"><use href="#windows" /></svg>
        <div class="find"><svg width="18" height="18" viewBox="0 0 18 18"><circle cx="10.800" cy="7" r="5.800" /><path d="M6.500 11.300 1.200 16.600" /></svg><span>Search</span></div>
        <span v-for="p in pinned" :key="p.icon" class="pin" :class="p.state">
          <svg v-if="p.icon === 'dell'" width="30" height="30" viewBox="0 0 30 30"><circle cx="15" cy="15" r="14" fill="none" stroke="#0a0a0a" stroke-width="1.800" /><text x="15" y="18.200" text-anchor="middle" font-family="Liberation Sans" font-weight="700" font-size="9" textLength="24" lengthAdjust="spacingAndGlyphs" fill="#0a0a0a" stroke="#0a0a0a" stroke-width=".4">DELL</text></svg>
          <svg v-else :width="p.icon === 'firefox' ? 28 : 30" :height="p.icon === 'firefox' ? 28 : 30"><use :href="'#' + p.icon" /></svg>
        </span>
      </div>
      <div class="tray">
        <svg width="16" height="10" viewBox="0 0 16 10"><path d="M.500 9 8 1.500 15.500 9" /></svg>
        <svg width="20" height="15" viewBox="0 0 20 15"><path fill="#8a8a8a" stroke="none" d="M4.500 14a4 4 0 0 1-.2-8 5.600 5.600 0 0 1 10.700 0 4 4 0 0 1 .5 8z" /><path fill="#f0f0f0" stroke="none" d="M3 13.500l9-5.500 7 3-1.500 2.500z" /><path stroke-width="1.200" d="M4.500 14a4 4 0 0 1-.2-8 5.600 5.600 0 0 1 10.700 0 4 4 0 0 1 .5 8z" /></svg>
        <svg width="18" height="20"><use href="#mcafee" width="18" height="20" stroke="none" /></svg>
        <svg width="20" height="21" viewBox="0 0 20 21"><path d="M1 9C2 4 6 1 10 1s7 2 8.500 5M18.500 1v5.500h-5M1 19.500V14h5M1.500 15c1 2 3 4 7 5" /><circle cx="15" cy="15.500" r="5" fill="#ff9a0a" stroke="none" /></svg>
        <div class="lang"><p>ENG</p><p>IN</p></div>
        <svg width="20" height="20" viewBox="0 0 20 20"><path d="M13 1.500H2a1.500 1.500 0 0 0-1.500 1.500v11A1.500 1.500 0 0 0 2 15.500h12.500M5 19h10M7.500 15.500V19M12.500 15.500V19M14.500.5h5V7h-5zM17 7v12M14.500 3.500h5" /></svg>
        <svg width="20" height="18" viewBox="0 0 20 18"><path d="M1 6v5.500h3L8.500 16V1.500L4 6zM11.500 6c1.500 1.500 1.500 4 0 6M14 3.500c3 3 3 8 0 11M16.500 1c4 4.500 4 11.500 0 16" /></svg>
        <svg width="20" height="14" viewBox="0 0 20 14"><rect x="1" y="1" width="16" height="12" rx="3" stroke-width="1.600" /><rect x="3.200" y="3.300" width="6.800" height="7.400" rx="1" fill="#111" stroke="none" /><path stroke-width="2" d="M18.500 5v4" /></svg>
        <div class="time"><p>15:49</p><p>19-12-2022</p></div>
      </div>
    </footer>
  </div>
</template>

<style>
body { margin: 0; }
</style>

<style scoped>
* { box-sizing: border-box; }
svg { display: block; flex: none; }
p, h1 { margin: 0; }
button { border: 0; padding: 0; background: none; font: inherit; color: inherit; }
.sprite { position: absolute; }
.screen { width: 1920px; height: 1080px; overflow: hidden; display: flex; flex-direction: column; background: #fff; font-family: Roboto, sans-serif; white-space: nowrap; }

.tabstrip { height: 43px; flex: none; display: flex; background: #dee1e6; padding-left: 11px; }
.tabs { display: flex; }
.tab { display: flex; align-items: center; justify-content: center; height: 42px; background: linear-gradient(#85888c, #85888c) right 9px / 1px 25px no-repeat; }
.tabs-left .tab { width: 35px; }
.tabs-left .tab:last-child { width: 32px; background: none; }
.tabs-right .tab { width: 33.77px; }
.tab-active { position: relative; width: 39px; height: 43px; display: flex; align-items: center; justify-content: center; background: #fff; border-radius: 9px 9px 0 0; color: #3c4043; }
.tab-active::before, .tab-active::after { content: ''; position: absolute; bottom: 0; width: 9px; height: 9px; }
.tab-active::before { left: -9px; background: radial-gradient(circle at 0 0, transparent 8.5px, #fff 9px); }
.tab-active::after { right: -9px; background: radial-gradient(circle at 100% 0, transparent 8.5px, #fff 9px); }
.newtab { margin: 10px 0 0 16px; color: #3c4043; }
.winctl { display: flex; margin: 10px 0 0 auto; padding-right: 21px; gap: 41px; }
.winctl path, .winctl rect { fill: none; stroke: #111; stroke-width: 1.1; }

.toolbar { height: 46px; flex: none; display: flex; align-items: center; border-bottom: 1px solid #d8dadd; color: #5f6368; padding-bottom: 1px; }
.nav { width: 135px; display: flex; padding-left: 15px; gap: 16px; }
.forward { transform: scaleX(-1); color: #b9bbbe; }
.omnibox { width: 1610px; height: 35px; border-radius: 18px; background: #f1f3f4; display: flex; align-items: center; padding: 0 12px 0 14px; }
.lock { margin-right: 12px; }
.url { flex: 1; font: 17.5px "Open Sans", sans-serif; letter-spacing: -0.38px; color: #5f6368; }
.url b { font-weight: 400; color: #202124; }
.share { margin-right: 18px; }
.ext { display: flex; align-items: center; padding-left: 18px; }
.ext svg:nth-of-type(2) { margin: 0 18px 0 20px; }
.avatar { width: 40px; height: 40px; border-radius: 50%; background: #8d6e63; color: #fff; display: flex; align-items: center; justify-content: center; font-size: 21px; font-weight: 500; }
.avatar.small { width: 28px; height: 28px; font-size: 14px; font-weight: 400; margin-right: 15px; }

.gmail { height: 860px; flex: none; background: #f6f8fc; display: flex; flex-direction: column; }
.topbar { height: 80px; display: flex; align-items: center; color: #5f6368; }
.brand { width: 320px; display: flex; align-items: center; padding-left: 30px; }
.burger { margin-right: 21px; }
.wordmark { font-size: 28.5px; margin-left: 13px; padding-top: 2px; color: #55585b; line-height: 30px; letter-spacing: -.5px; }
.searchbox { width: 903px; height: 60px; border-radius: 10px; background: #eaf1fb; display: flex; align-items: center; padding: 0 22px 0 21px; color: #444746; }
.placeholder { flex: 1; margin-left: 20px; padding-top: 2px; font-size: 20px; color: #6a6d70; }
.account { display: flex; align-items: center; margin-left: auto; padding-right: 22px; }
.account svg { margin-right: 25px; }
.account svg:nth-of-type(3) { margin: 0 27px 0 1px; }

.body { display: flex; height: 780px; }
.sidebar { width: 320px; }
.compose { margin: 10px 0 0 10px; width: 178px; height: 70px; border-radius: 20px; background: #c2e7ff; display: flex; align-items: center; padding-left: 22px; color: #000; }
.compose span { margin-left: 22px; color: #001d35; font-size: 17.5px; letter-spacing: .5px; }
.sidebar nav { margin-top: 20px; color: #444746; }
.folder { display: flex; align-items: center; width: 300px; height: 40px; padding-left: 33px; border-radius: 0 20px 20px 0; }
.folder span { margin-left: 22px; font-size: 17.5px; color: #202124; letter-spacing: .25px; }
.folder.current { background: #d3e3fd; color: #041e49; }
.folder.current span { font-weight: 700; color: #001d35; letter-spacing: .9px; }
.labels { display: flex; justify-content: space-between; align-items: center; width: 290px; margin-top: 32px; height: 30px; padding-left: 33px; font-size: 20px; letter-spacing: .5px; color: #1f1f1f; }
.labels svg { color: #5f6368; }

.card { width: 1530px; height: 760px; border-radius: 20px; background: #fff; overflow: hidden; display: flex; flex-direction: column; }
.actions { width: 1505px; height: 61px; margin-left: 3px; flex: none; display: flex; align-items: center; color: #5b5e60; border-bottom: 1px solid #e6e7e8; box-shadow: 0 1px 1px #f3f3f3; padding-left: 18px; }
.goback { margin-right: 31px; }
.group { display: flex; position: relative; }
.group + .group { margin-left: 20px; }
.group + .group::before { content: ''; position: absolute; left: -11px; top: 0; width: 1px; height: 25px; background: #e4e6e8; }
.tool { width: 55px; display: flex; justify-content: center; }
.more { margin-left: 11px; }
.pager { display: flex; align-items: center; margin-left: auto; padding-right: 18px; font-size: 15px; letter-spacing: -.3px; color: #5f6368; }
.pager svg { color: #444746; }
.pager .prev { transform: scaleX(-1); color: #b8babb; margin: 0 24px 0 26px; }
.thread { flex: 1; display: flex; }
.messages { width: 1490px; margin-right: 26px; }
.message { padding-left: 90px; }
.message.first { height: 204px; border-bottom: 1px solid #eceeef; }
h1 { font: 700 32.5px/38px "Liberation Sans", Arial, sans-serif; letter-spacing: -.04px; color: #222; padding-left: 1px; }
h1.quoted { color: #500050; }
.details { width: 1400px; height: 113px; border: 2px dashed #fb4314; padding: 1px; font: 16.25px/27px "Liberation Sans", Arial, sans-serif; color: #222; }
.first .details { margin-top: 27px; }
.row { display: flex; height: 27px; }
.row:nth-child(2) { background: #e0e0e0; }
.row b { width: 570px; text-align: center; margin-right: 2px; }
.row a { color: #15c; text-decoration: underline; }
.sender { height: 112px; display: flex; padding-top: 25px; }
.unknown { margin: 2px 22px 0 -68px; }
.unknown text { font: 700 31px Roboto, sans-serif; fill: #db4437; }
.who { flex: 1; color: #5f6368; font-size: 15px; padding-top: 1px; }
.from { display: flex; align-items: baseline; height: 24px; }
.from b { color: #1f1f1f; font-size: 17.5px; letter-spacing: .6px; margin-right: 4px; font-weight: 700; }
.to { display: flex; align-items: center; height: 23px; letter-spacing: .1px; }
.caret { border: 5.5px solid transparent; border-top: 6px solid #5f6368; border-bottom: 0; margin-left: 8px; }
.meta { display: flex; align-items: center; height: 26px; font-size: 15px; letter-spacing: -.04px; color: #5f6368; }
.meta svg { color: #5b5e60; }
.meta svg:nth-of-type(1) { margin: 0 27px 0 26px; }
.meta svg:nth-of-type(2) { margin-right: 26px; }
.meta svg:nth-of-type(3) { margin-right: 2px; }
.sender + h1 { margin-bottom: 27px; }
.respond { display: flex; gap: 10px; margin-top: 47px; color: #444746; font-size: 17.5px; letter-spacing: .4px; }
.respond button { height: 45px; border: 1px solid #747775; border-radius: 23px; display: flex; align-items: center; }
.reply { width: 130px; padding-left: 23px; }
.fwd { width: 140px; padding-left: 16px; }
.respond svg { width: 22px; height: 22px; }
.respond button span { margin-left: 12px; }
.flip { transform: scaleX(-1); }
.scroll { width: 14px; padding-top: 224px; }
.thumb { height: 476px; background: #cbcbcb; border-left: 1px solid #b8b8b8; border-top: 1px solid #b8b8b8; }

.rail { width: 70px; display: flex; flex-direction: column; align-items: center; padding: 24px 0 2px 2px; }
.rail svg + svg { margin-top: 46px; }
.rail hr { width: 25px; height: 1px; border: 0; background: #dcdfe3; margin: 42px 0 0; }
.rail .add { margin-top: 42px; color: #000; }
.rail svg.hide { margin: 362px 1px 0 0; color: #1f1f1f; }

.shelf { height: 71px; flex: none; border-top: 1px solid #d5d7dc; background: #fff; display: flex; align-items: center; font: 15.5px "Open Sans", sans-serif; color: #3c4043; padding-bottom: 1px; }
.dl { display: flex; align-items: center; height: 55px; margin-top: 2px; border-right: 2px solid #ccced1; }
.dl-vbs { width: 296px; padding-left: 26px; border-right-width: 1px; }
.dl-vbs span { margin-left: 17px; width: 199px; letter-spacing: -.1px; }
.dl-pdf { width: 292px; padding-left: 22px; }
.dl-pdf span { margin-left: 18px; width: 199px; letter-spacing: -.1px; }
.up path { fill: none; stroke: #5f6368; stroke-width: 2; }
.shelf-end { margin-left: auto; display: flex; align-items: center; padding-right: 14px; gap: 13px; }
.shelf-end button { width: 98px; height: 40px; border: 1px solid #dadce0; border-radius: 5px; color: #1a66e8; font-size: 15px; }
.shelf-end svg { color: #5f6368; }

.taskbar { height: 60px; flex: none; display: flex; align-items: center; border-top: 1px solid #c5d2c5; padding-bottom: 2px; color: #1a1a1a; font: 15px/20px "Open Sans", sans-serif;
  background: linear-gradient(98deg, #c6ebdf 0, #c9ecdc 60px, #cfeed0 150px, #d7efbf 205px, #e0edb6 240px, #ecdfbd 295px, #e8dfca 320px, #dae4d3 370px, #d0e8d3 440px, #d6e4d3 560px, #dfe0da 650px, #e6dccb 730px, #dde2d0 800px, #d4e6d3 970px, #d9e2d8 1080px, #d4e6d4 1180px, #e3e3d3 1280px, #edddd4 1370px, #ecdfdf 1480px, #efe3e2 1560px, #e0e4dc 1625px, #d0e5dd 1700px, #d3e4de 1800px, #d3e5dd 1880px, #e0e2cf 1920px); }
.weather { width: 605px; display: flex; align-items: center; padding-left: 26px; gap: 9px; letter-spacing: -.2px; }
.weather > div { padding-bottom: 1px; }
.weather .dim { color: #4a5a52; }
.dock { display: flex; align-items: center; height: 60px; }
.find { width: 123px; height: 38px; margin: 0 5px 0 18px; border-radius: 19px; background: #f7f7f3; box-shadow: 0 1px 1px #c4c8bf; display: flex; align-items: center; padding-left: 28px; gap: 6px; letter-spacing: -.35px; }
.find svg { fill: none; stroke: #1a1a1a; stroke-width: 1.9; }
.pin { width: 55px; height: 48px; display: flex; align-items: center; justify-content: center; position: relative; }
.pin svg { position: relative; }
.pin.active::before { content: ''; position: absolute; inset: 0 3.5px; border-radius: 5px; background: #eef1ec; box-shadow: 0 0 1px #b9c0b9; }
.pin.active::after, .pin.open::after { content: ''; position: absolute; bottom: 0; left: 50%; width: 8px; height: 4px; margin-left: -4px; border-radius: 2px; background: #7e817b; }
.pin.active::after { width: 20px; margin-left: -10px; background: #0078d7; }
.tray { margin-left: auto; display: flex; align-items: center; padding-right: 19px; }
.tray > svg { fill: none; stroke: #111; stroke-width: 1.2; }
.tray > svg:nth-of-type(n + 2) { margin-left: 12px; }
.tray > svg:nth-of-type(4) { margin-left: 11px; }
.tray > svg:nth-of-type(5) { margin-left: 0; }
.tray > svg:nth-of-type(n + 6) { margin-left: 10px; }
.lang { width: 69px; text-align: center; padding-right: 3px; letter-spacing: -.2px; }
.time { width: 92px; text-align: right; letter-spacing: -.55px; }
</style>
